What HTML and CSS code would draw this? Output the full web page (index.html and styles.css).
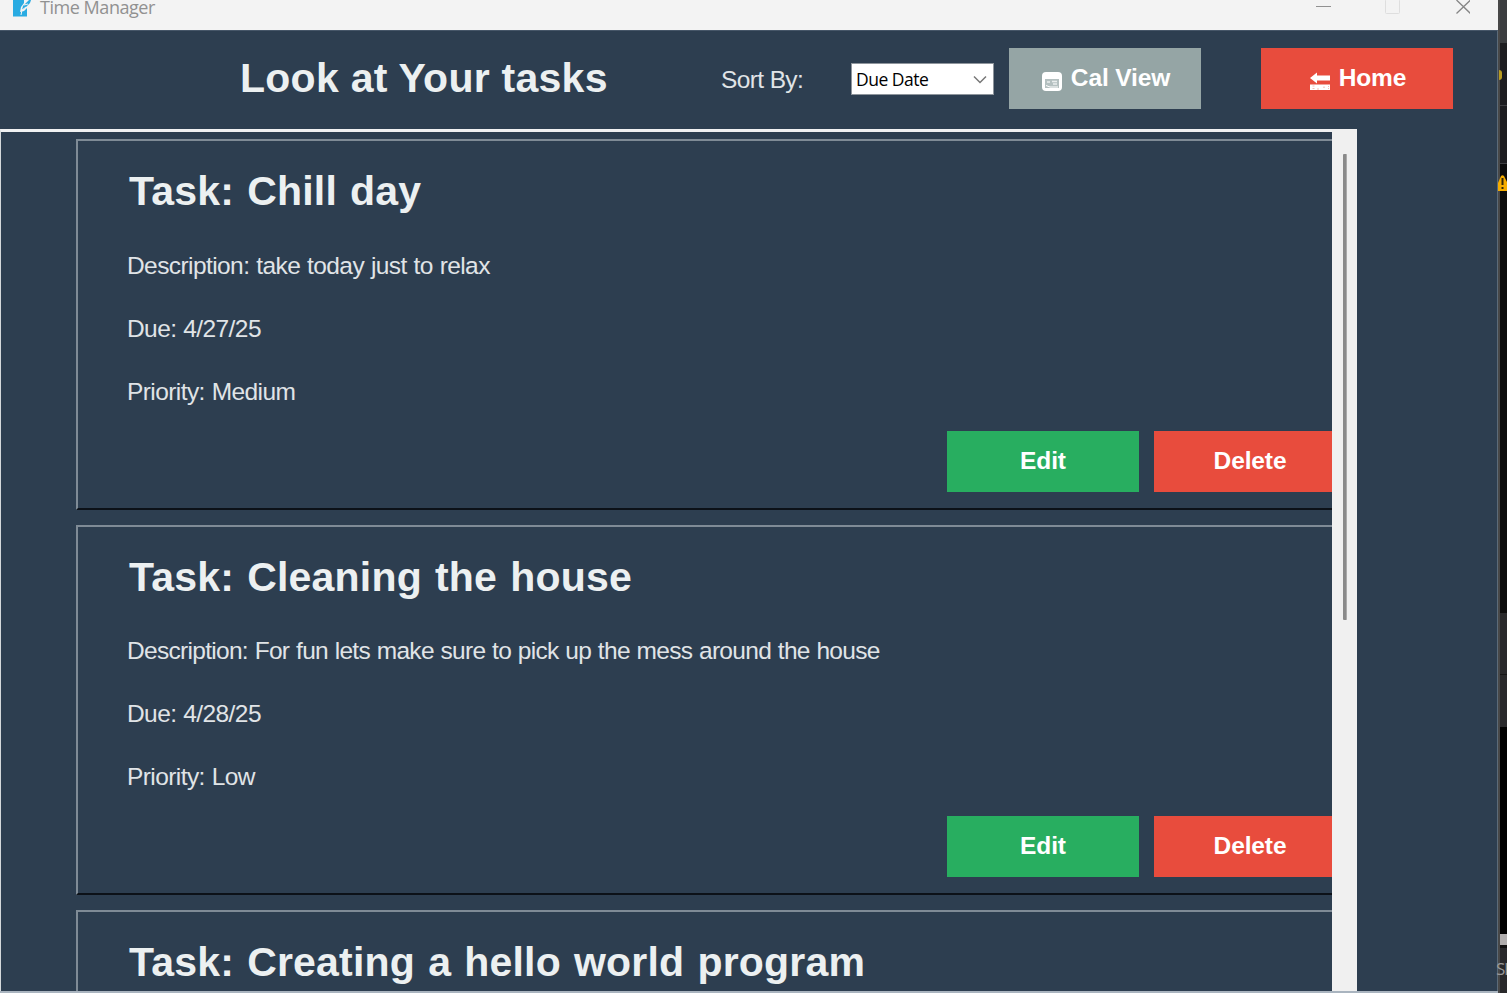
FILE: index.html
```html
<!DOCTYPE html>
<html lang="en">
<head>
<meta charset="utf-8">
<title>Time Manager</title>
<link rel="stylesheet" href="styles.css">
</head>
<body>
<div class="desktop">
  <main class="window">
    <div class="titlebar">
      <svg class="app-icon" width="20" height="17" viewBox="0 0 20 17"><path fill="#29abe2" d="M1 0h11v3l-3 4-1 5 4-1 3-3v8.500H1z"/><path fill="#29abe2" d="M17 0h2l-1 3-5 5-3 2 1-4z"/><path stroke="#f3f3f3" stroke-width="1" fill="none" d="M16 4l-4 1M14 7l-4 3-1 5"/></svg>
      <span class="app-name">Time Manager</span>
      <svg class="controls" width="170" height="30" viewBox="0 0 170 30" fill="none"><path stroke="#919191" d="M16 6.500h15"/><rect x="85.500" y="-.5" width="14" height="14" rx="1" stroke="#dedede"/><path stroke="#858585" stroke-width="1.300" d="M156.500 0l14 13.500M170.500 0l-14 13.500"/></svg>
    </div>
    <header class="header">
      <h1 class="title">Look at Your tasks</h1>
      <span class="sort-label">Sort By:</span>
      <div class="select"><span>Due Date</span><svg width="14" height="9" viewBox="0 0 14 9"><path d="M1 1.500l6 6 6-6" fill="none" stroke="#777" stroke-width="1.500"/></svg></div>
      <button class="btn cal"><svg width="22" height="21" viewBox="0 0 22 21"><rect x="1" y="1" width="20" height="19" rx="4" fill="#fff"/><path d="M4 8h14v9H4z" fill="#b4c0c0"/><path d="M11 10.500h5M12 13h4M6 11h3" stroke="#e9eded" stroke-width="1.500"/><path d="M5 14.500l4 1.500h8" stroke="#fff" fill="none"/></svg><span>Cal View</span></button>
      <button class="btn home"><svg width="21" height="19" viewBox="0 0 21 19"><path d="M0 6L7 .5v3h13v5H7v3z" fill="#fff"/><path d="M0 12.500h20v5.500H0z" fill="#fff"/><path d="M2.500 14h2M2.500 16.500h2M8 18v-2M13 15.200h2M18.500 14v1M18.500 16v1" stroke="#f6bdb6"/></svg><span>Home</span></button>
    </header>
    <div class="content">
      <section class="list">
        <article class="card">
          <h2 class="task">Task: Chill day</h2>
          <p>Description: take today just to relax</p>
          <p>Due: 4/27/25</p>
          <p>Priority: Medium</p>
          <div class="actions"><button class="btn edit">Edit</button><button class="btn delete">Delete</button></div>
        </article>
        <article class="card">
          <h2 class="task">Task: Cleaning the house</h2>
          <p class="long">Description: For fun lets make sure to pick up the mess around the house</p>
          <p>Due: 4/28/25</p>
          <p>Priority: Low</p>
          <div class="actions"><button class="btn edit">Edit</button><button class="btn delete">Delete</button></div>
        </article>
        <article class="card">
          <h2 class="task">Task: Creating a hello world program</h2>
        </article>
      </section>
      <div class="scrollbar"><div class="thumb"></div></div>
    </div>
  </main>
  <aside class="behind">
    <div class="b1"></div>
    <div class="b2"><i class="dot"></i></div>
    <div class="b3"></div>
    <div class="b4"><svg width="9" height="17" viewBox="0 0 9 17"><path d="M0 16V8L3 1q1.500-1.500 3 0l3 6v9z" fill="#f5ac00"/><path d="M4.500 3v7M4.500 12v2" stroke="#33270a" stroke-width="2"/></svg></div>
    <div class="b5"></div>
    <div class="b6"></div>
    <div class="b7"></div>
    <div class="b8"></div>
    <div class="b9"><span>Sl</span></div>
  </aside>
</div>
</body>
</html>
```
FILE: styles.css
```css
* { box-sizing: border-box; }
body { margin: 0; overflow: hidden; background: #2d3e50; font-family: "Liberation Sans", Arial, sans-serif; }
.desktop { display: flex; width: 1507px; height: 993px; overflow: hidden; }
.window { display: flex; flex-direction: column; width: 1498px; height: 993px; background: #2d3e50; border-bottom: 2px solid #a9b4bf; flex: none; }
.titlebar { display: flex; height: 30px; flex: none; background: #f3f3f3; padding-left: 12px; align-items: flex-start; }
.app-name { font: 18px/16px "Open Sans", "Noto Sans", sans-serif; color: #919191; margin: -1px 0 0 8px; letter-spacing: -.46px; }
.controls { margin-left: auto; margin-right: 28px; }
.header { display: flex; height: 99px; flex: none; border-top: 1px solid #465668; border-right: 1px solid #5c6b79; padding: 17px 0 0 240px; align-items: flex-start; }
.title { margin: 5px 0 0; width: 481px; font-size: 41px; line-height: 50px; letter-spacing: .26px; color: #ecf0f1; white-space: nowrap; }
.sort-label { width: 130px; margin-top: 17px; font-size: 24.500px; line-height: 30px; letter-spacing: -.62px; color: #e0e4e7; white-space: nowrap; }
.select { display: flex; justify-content: space-between; align-items: center; width: 143px; height: 32px; margin: 15px 15px 0 0; padding: 0 6px 0 4px; background: #fff; border: 1.500px solid #8e959c; color: #000; font: 17.500px/28px "Open Sans", sans-serif; letter-spacing: -.5px; }
.btn { display: flex; align-items: center; justify-content: center; width: 192px; height: 61px; padding: 0 0 1px; border: 0; color: #fff; font: bold 24.500px/30px "Liberation Sans", Arial, sans-serif; letter-spacing: -.12px; flex: none; white-space: nowrap; }
.cal { background: #95a5a5; gap: 8px; margin-right: 60px; padding-left: 1px; }
.cal svg { margin-top: 7px; }
.home { background: #e84c3d; gap: 8px; padding-left: 2px; }
.home svg { margin-top: 6px; }
.content { display: flex; flex: 1; min-height: 0; border-right: 1px solid #5c6b79; }
.list { width: 1332px; border-top: 3px solid #f0f1f2; border-left: 1px solid #d4d8da; padding: 7px 0 0 75px; overflow: hidden; flex: none; }
.card { width: 1500px; height: 370.500px; margin-bottom: 15px; padding: 24px 0 0 49px; border-top: 2px solid #7f8b96; border-left: 2px solid #7f8b96; border-bottom: 2px solid #0c1118; color: #ecf0f1; }
.task { margin: 0 0 33.600px 2px; font-size: 41px; line-height: 52px; letter-spacing: .2px; word-spacing: 1.500px; white-space: nowrap; }
.card p { margin: 0 0 33px; font-size: 24.500px; line-height: 30px; letter-spacing: -.58px; word-spacing: .6px; white-space: nowrap; color: #e0e4e7; }
.card .long { letter-spacing: -.7px; }
.card p:nth-of-type(3) { margin-bottom: 0; }
.actions { display: flex; gap: 15px; margin: 24px 0 0 820px; }
.edit { background: #28ae60; }
.delete { background: #e84c3d; }
.scrollbar { width: 25px; background: #f0f0f0; padding: 25px 0 0 11px; flex: none; }
.thumb { width: 4px; height: 466px; border-radius: 1px; background: #8a8a8a; border-right: 1px solid #aaa; }
.behind { width: 9px; height: 993px; flex: none; border-left: 2px solid #484848; }
.b1 { height: 43px; background: #3b3d3f; }
.b2 { height: 63px; background: #1d1d20; padding-top: 27px; border-bottom: 1px solid #3f3f42; }
.dot { display: block; width: 3px; height: 10px; margin-left: -1px; background: #b99c20; border-radius: 0 3px 3px 0; }
.b3 { height: 58px; background: #1d1d20; border-bottom: 1px solid #3f3f42; }
.b4 { height: 449px; background: #0c0c0c; padding-top: 11px; }
.b4 svg { display: block; margin-left: -2px; }
.b5 { height: 62px; background: #29292b; border-bottom: 1px solid #161616; }
.b6 { height: 52px; background: #29292b; }
.b7 { height: 207px; background: #000; }
.b8 { height: 11px; background: #b0adad; }
.b9 { height: 48px; background: #29292b; border-top: 3px solid #111; padding-top: 8px; font: 17px/26px "Open Sans", sans-serif; letter-spacing: -1px; color: #999; white-space: nowrap; }
.b9 span { margin-left: -4px; }
```
